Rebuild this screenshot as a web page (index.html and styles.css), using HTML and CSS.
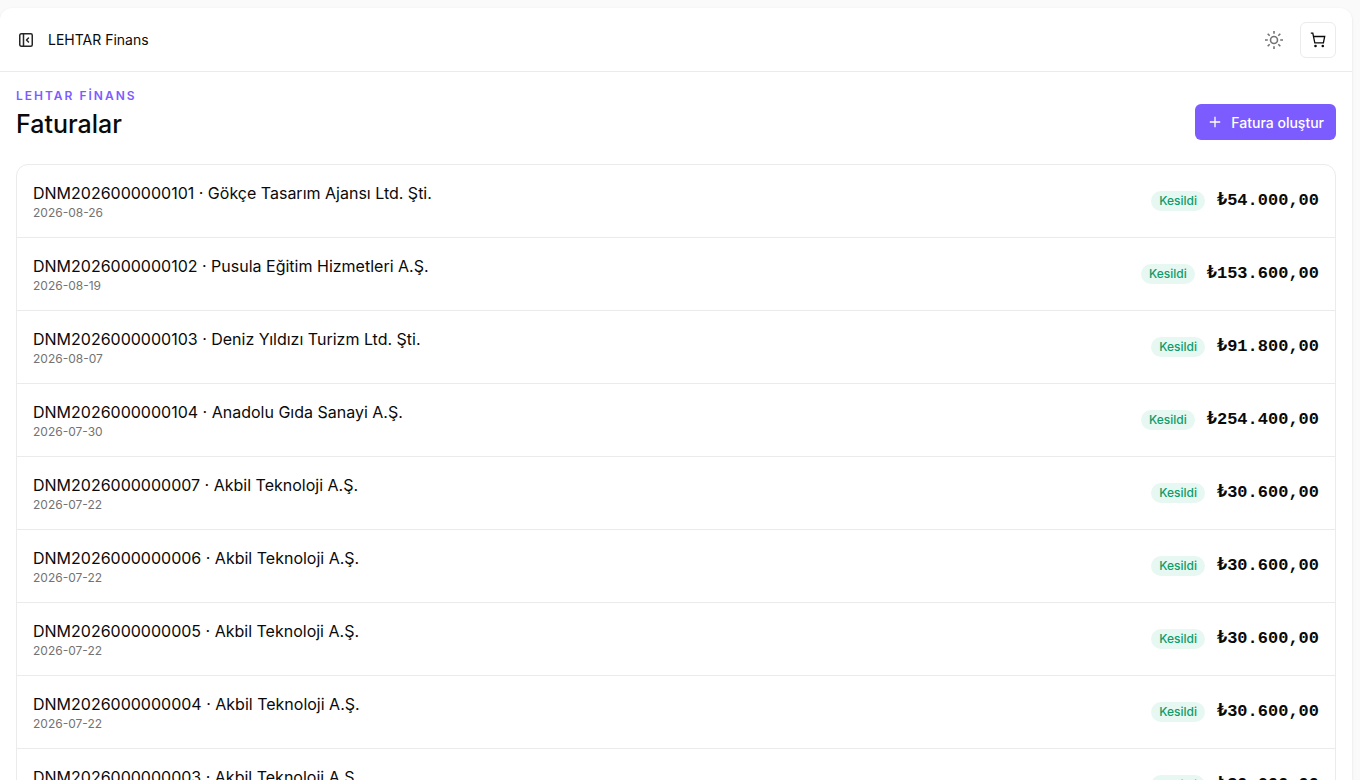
FILE: index.html
```html
<!DOCTYPE html>
<html lang="tr">

<head>
    <meta charset="UTF-8">
    <meta name="viewport" content="width=device-width, initial-scale=1.0">
    <title>Faturalar</title>
    <link rel="stylesheet" href="styles.css">
</head>

<body>
    <div class="panel">
        <header class="topbar">
            <button class="icon-button" type="button" aria-label="Menü">
                <svg width="16" height="16" viewBox="0 0 16 16" fill="none" stroke="currentColor" stroke-width="1.5" stroke-linecap="round" stroke-linejoin="round">
                    <rect x="1.75" y="1.75" width="12.5" height="12.5" rx="1.5" />
                    <path d="M5.5 2v12M10.5 6l-2 2 2 2" />
                </svg>
            </button>
            <span class="brand">LEHTAR Finans</span>
            <div class="topbar-actions">
                <button class="icon-button theme" type="button" aria-label="Tema">
                    <svg width="20" height="20" viewBox="0 0 20 20" fill="none" stroke="currentColor" stroke-width="1.6">
                        <circle cx="10" cy="10" r="3.5" />
                        <path d="M10 1v2.8M10 16.2v2.8M1 10h2.8M16.2 10h2.8M3.7 3.7l2 2M14.3 14.3l2 2M3.7 16.3l2-2M14.3 5.7l2-2" />
                    </svg>
                </button>
                <button class="icon-button cart" type="button" aria-label="Sepet">
                    <svg width="16" height="16" viewBox="0 0 16 16" fill="none" stroke="currentColor" stroke-width="1.3">
                        <path d="M.8 1.2h2l2 9.6h8.6l1.3-6.3H3.5" />
                        <circle cx="5.5" cy="14" r="1.3" fill="currentColor" stroke="none" />
                        <circle cx="12.8" cy="14" r="1.3" fill="currentColor" stroke="none" />
                    </svg>
                </button>
            </div>
        </header>
        <main class="content">
            <div class="page-head">
                <div>
                    <p class="eyebrow">LEHTAR FİNANS</p>
                    <h1>Faturalar</h1>
                </div>
                <button class="create-button" type="button">
                    <svg width="16" height="16" viewBox="0 0 16 16" fill="none" stroke="currentColor" stroke-width="1.3">
                        <path d="M8 2.8v10.4M2.8 8h10.4" />
                    </svg>
                    Fatura oluştur
                </button>
            </div>
            <ul class="invoices">
                <li class="invoice">
                    <div>
                        <p class="invoice-name">DNM2026000000101 · Gökçe Tasarım Ajansı Ltd. Şti.</p>
                        <p class="invoice-date">2026-08-26</p>
                    </div>
                    <span class="badge">Kesildi</span>
                    <span class="amount">₺54.000,00</span>
                </li>
                <li class="invoice">
                    <div>
                        <p class="invoice-name">DNM2026000000102 · Pusula Eğitim Hizmetleri A.Ş.</p>
                        <p class="invoice-date">2026-08-19</p>
                    </div>
                    <span class="badge">Kesildi</span>
                    <span class="amount">₺153.600,00</span>
                </li>
                <li class="invoice">
                    <div>
                        <p class="invoice-name">DNM2026000000103 · Deniz Yıldızı Turizm Ltd. Şti.</p>
                        <p class="invoice-date">2026-08-07</p>
                    </div>
                    <span class="badge">Kesildi</span>
                    <span class="amount">₺91.800,00</span>
                </li>
                <li class="invoice">
                    <div>
                        <p class="invoice-name">DNM2026000000104 · Anadolu Gıda Sanayi A.Ş.</p>
                        <p class="invoice-date">2026-07-30</p>
                    </div>
                    <span class="badge">Kesildi</span>
                    <span class="amount">₺254.400,00</span>
                </li>
                <li class="invoice">
                    <div>
                        <p class="invoice-name">DNM2026000000007 · Akbil Teknoloji A.Ş.</p>
                        <p class="invoice-date">2026-07-22</p>
                    </div>
                    <span class="badge">Kesildi</span>
                    <span class="amount">₺30.600,00</span>
                </li>
                <li class="invoice">
                    <div>
                        <p class="invoice-name">DNM2026000000006 · Akbil Teknoloji A.Ş.</p>
                        <p class="invoice-date">2026-07-22</p>
                    </div>
                    <span class="badge">Kesildi</span>
                    <span class="amount">₺30.600,00</span>
                </li>
                <li class="invoice">
                    <div>
                        <p class="invoice-name">DNM2026000000005 · Akbil Teknoloji A.Ş.</p>
                        <p class="invoice-date">2026-07-22</p>
                    </div>
                    <span class="badge">Kesildi</span>
                    <span class="amount">₺30.600,00</span>
                </li>
                <li class="invoice">
                    <div>
                        <p class="invoice-name">DNM2026000000004 · Akbil Teknoloji A.Ş.</p>
                        <p class="invoice-date">2026-07-22</p>
                    </div>
                    <span class="badge">Kesildi</span>
                    <span class="amount">₺30.600,00</span>
                </li>
                <li class="invoice">
                    <div>
                        <p class="invoice-name">DNM2026000000003 · Akbil Teknoloji A.Ş.</p>
                        <p class="invoice-date">2026-07-22</p>
                    </div>
                    <span class="badge">Kesildi</span>
                    <span class="amount">₺30.600,00</span>
                </li>
            </ul>
        </main>
    </div>
</body>

</html>
```
FILE: styles.css
```css
* {
    box-sizing: border-box;
}

body {
    margin: 0;
    padding: 8px 8px 8px 0;
    background-color: #fafafa;
    color: #0a0a0a;
    font-family: Inter, "Liberation Sans", sans-serif;
    font-size: 16px;
    line-height: 24px;
}

p,
h1,
ul {
    margin: 0;
    padding: 0;
}

button {
    font-family: inherit;
    cursor: pointer;
}

.panel {
    background-color: #fff;
    border-radius: 12px;
    box-shadow: 0 1px 3px rgba(0, 0, 0, 0.1);
}

.topbar {
    display: flex;
    align-items: center;
    height: 64px;
    padding: 0 16px 0 8px;
    border-bottom: 1px solid #ebebeb;
}

.icon-button {
    display: flex;
    align-items: center;
    justify-content: center;
    width: 36px;
    height: 36px;
    padding: 0;
    border: none;
    border-radius: 6px;
    background: none;
    color: #262626;
}

.brand {
    margin-left: 4px;
    font-size: 14px;
    line-height: 20px;
}

.topbar-actions {
    display: flex;
    gap: 8px;
    margin-left: auto;
}

.theme {
    color: #737373;
}

.cart {
    border: 1px solid #ebebeb;
    color: #0a0a0a;
}

.content {
    padding: 16px;
}

.page-head {
    display: flex;
    align-items: flex-end;
    justify-content: space-between;
    margin-bottom: 24px;
}

.eyebrow {
    margin-bottom: 4px;
    color: #7c5cff;
    font-size: 12px;
    font-weight: 600;
    line-height: 16px;
    letter-spacing: 2px;
}

h1 {
    font-size: 25px;
    font-weight: 500;
    line-height: 32px;
}

.create-button {
    display: flex;
    align-items: center;
    gap: 8px;
    height: 36px;
    padding: 0 12px;
    border: none;
    border-radius: 6px;
    background-color: #7c5cff;
    color: #fff;
    font-size: 14px;
    font-weight: 500;
}

.invoices {
    list-style: none;
    border: 1px solid #ebebeb;
    border-radius: 12px;
}

.invoice {
    display: flex;
    align-items: center;
    gap: 12px;
    padding: 16px;
}

.invoice + .invoice {
    border-top: 1px solid #ebebeb;
}

.invoice > div {
    flex: 1;
}

.invoice-date {
    color: #737373;
    font-size: 12px;
    line-height: 16px;
}

.badge {
    padding: 2px 8px;
    border-radius: 10px;
    background-color: #e6f8f1;
    color: #109b69;
    font-size: 12px;
    font-weight: 500;
    line-height: 16px;
}

.amount {
    font-family: "Liberation Mono", monospace;
    font-size: 17px;
    font-weight: 600;
    line-height: 26px;
}
```
